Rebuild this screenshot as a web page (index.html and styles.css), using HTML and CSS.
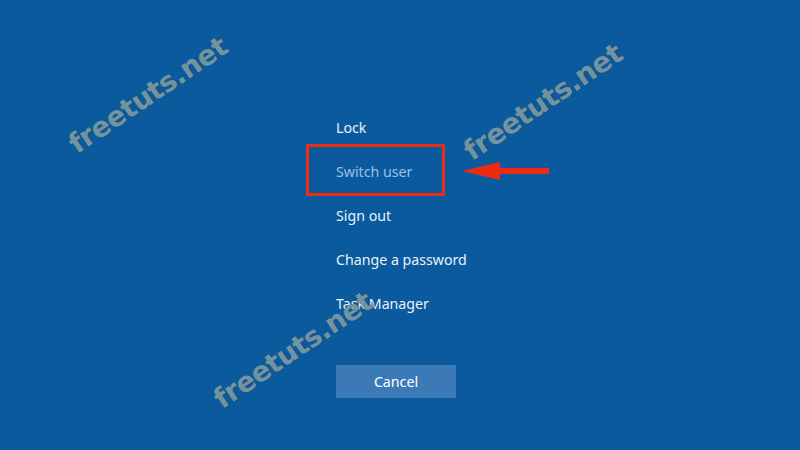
FILE: index.html
```html
<!DOCTYPE html>
<html>
<head>
<meta charset="utf-8">
<link rel="stylesheet" href="styles.css">
</head>
<body>
<div class="screen">
  <div class="menu">
    <div class="item">Lock</div>
    <div class="item dim highlighted">Switch user</div>
    <div class="item">Sign out</div>
    <div class="item">Change a password</div>
    <div class="item">Task Manager</div>
    <div class="actions">
      <button class="cancel">Cancel</button>
    </div>
  </div>
  <svg class="arrow" width="90" height="22" viewBox="0 0 90 22">
    <polygon points="0,11 38,2 38,8 87,8 87,14 38,14 38,20" fill="#ee2a12"/>
  </svg>
  <div class="wm wm1">freetuts.net</div>
  <div class="wm wm2">freetuts.net</div>
  <div class="wm wm3">freetuts.net</div>
</div>
</body>
</html>
```
FILE: styles.css
```css
html, body {
  margin: 0;
  padding: 0;
}
body {
  width: 800px;
  height: 450px;
  overflow: hidden;
  background: #0b5a9e;
}
.screen {
  position: relative;
  width: 800px;
  height: 450px;
  background: #0b5a9e;
  font-family: "Noto Sans", "Open Sans", sans-serif;
}
.menu {
  display: flex;
  flex-direction: column;
  padding: 105px 0 0 336px;
}
.item {
  height: 44px;
  display: flex;
  align-items: center;
  font-size: 14.2px;
  color: #e9f1f9;
  position: relative;
}
.item.dim {
  color: #9cc0e4;
}
.highlighted::after {
  content: "";
  position: absolute;
  left: -30px;
  top: -5px;
  width: 133px;
  height: 46px;
  border: 3.5px solid #ec2d16;
}
.actions {
  padding-top: 40px;
}
.cancel {
  width: 120px;
  height: 33px;
  border: none;
  background: #3b7ab6;
  color: #ffffff;
  font-family: "Noto Sans", "Open Sans", sans-serif;
  font-size: 14.2px;
  padding: 0;
}
.arrow {
  position: absolute;
  left: 462px;
  top: 160px;
}
.wm {
  position: absolute;
  font-family: "DejaVu Sans", sans-serif;
  font-weight: bold;
  font-size: 28px;
  color: #7393a0;
  letter-spacing: -0.5px;
  transform: translate(-50%, -50%) rotate(-34deg);
  white-space: nowrap;
  text-shadow: 1px 1px 1px rgba(40, 70, 90, 0.35);
}
.wm1 { left: 148px; top: 95px; }
.wm2 { left: 543px; top: 102px; }
.wm3 { left: 293px; top: 350px; }
```
